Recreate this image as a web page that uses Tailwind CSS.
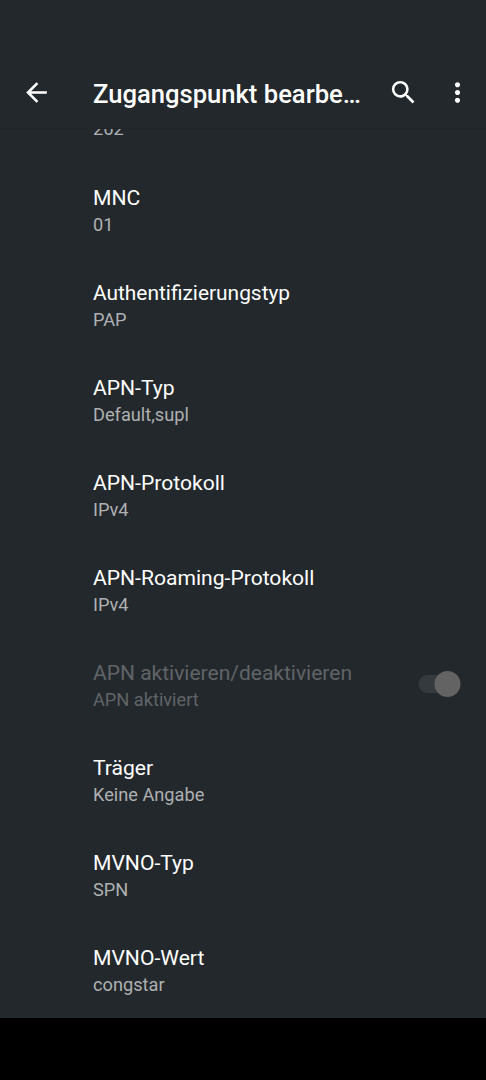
<!DOCTYPE html>
<html lang="de">
<head>
    <meta charset="UTF-8">
    <meta name="viewport" content="width=device-width, initial-scale=1.0">
    <title>Zugangspunkt bearbeiten</title>
    <script src="https://cdn.jsdelivr.net/npm/@tailwindcss/browser@4"></script>
</head>
<body class="bg-[#23282c] text-white font-[Roboto,sans-serif] h-[1080px] flex flex-col overflow-hidden">

  <!-- App bar -->
  <header class="h-[129px] shrink-0 pt-14 flex items-center border-b border-[#202529]">
    <button class="ml-[21px] w-[31px] h-[31px]">
      <svg viewBox="0 0 24 24" class="w-full h-full" fill="currentColor"><path d="M20 11H7.83l5.59-5.59L12 4l-8 8 8 8 1.41-1.41L7.83 13H20v-2z"/></svg>
    </button>
    <h1 class="ml-[41px] pt-1 w-[275px] text-[25.6px] font-medium whitespace-nowrap">Zugangspunkt bearbe…</h1>
    <button class="ml-[20px] w-[31px] h-[31px]">
      <svg viewBox="0 0 24 24" class="w-full h-full" fill="currentColor"><path d="M15.5 14h-.79l-.28-.27A6.471 6.471 0 0 0 16 9.5 6.5 6.5 0 1 0 9.5 16c1.61 0 3.09-.59 4.23-1.57l.27.28v.79l5 4.99L20.49 19l-4.99-5zm-6 0C7.01 14 5 11.99 5 9.5S7.01 5 9.5 5 14 7.01 14 9.5 11.99 14 9.5 14z"/></svg>
    </button>
    <button class="ml-[23px] w-[31px] h-[31px]">
      <svg viewBox="0 0 24 24" class="w-full h-full" fill="currentColor"><path d="M12 8c1.1 0 2-.9 2-2s-.9-2-2-2-2 .9-2 2 .9 2 2 2zm0 2c-1.1 0-2 .9-2 2s.9 2 2 2 2-.9 2-2-.9-2-2-2zm0 6c-1.1 0-2 .9-2 2s.9 2 2 2 2-.9 2-2-.9-2-2-2z"/></svg>
    </button>
  </header>

  <!-- Settings list, scrolled so the MCC value sits half under the bar -->
  <main class="h-[889px] shrink-0 overflow-hidden pl-[93px]">
    <p class="-mt-3 h-[50.6px] text-[18.2px] leading-6 text-[#aeb0b2]">262</p>
    <div class="h-[95.12px] pt-4">
      <h2 class="text-[21.1px] leading-7">MNC</h2>
      <p class="text-[18.2px] leading-[25.4px] text-[#aeb0b2]">01</p>
    </div>
    <div class="h-[95.12px] pt-4">
      <h2 class="text-[20.9px] leading-7">Authentifizierungstyp</h2>
      <p class="text-[18.2px] leading-[25.4px] text-[#aeb0b2]">PAP</p>
    </div>
    <div class="h-[95.12px] pt-4">
      <h2 class="text-[21.1px] leading-7">APN-Typ</h2>
      <p class="text-[18.2px] leading-[25.4px] text-[#aeb0b2]">Default,supl</p>
    </div>
    <div class="h-[95.12px] pt-4">
      <h2 class="text-[21.1px] leading-7">APN-Protokoll</h2>
      <p class="text-[18.2px] leading-[25.4px] text-[#aeb0b2]">IPv4</p>
    </div>
    <div class="h-[95.12px] pt-4">
      <h2 class="text-[21.1px] leading-7">APN-Roaming-Protokoll</h2>
      <p class="text-[18.2px] leading-[25.4px] text-[#aeb0b2]">IPv4</p>
    </div>
    <div class="h-[95.12px] pt-4 flex justify-between">
      <div>
        <h2 class="text-[21px] leading-7 text-[#606467]">APN aktivieren/deaktivieren</h2>
        <p class="text-[18.2px] leading-[25.4px] text-[#606467]">APN aktiviert</p>
      </div>
      <svg viewBox="0 0 44 28" class="w-11 h-7 mt-[11px] mr-6"><rect x="0.5" y="5" width="38" height="18" rx="9" fill="#343a3e"/><circle cx="29.5" cy="14" r="13" fill="#636363"/></svg>
    </div>
    <div class="h-[95.12px] pt-4">
      <h2 class="text-[21.1px] leading-7">Träger</h2>
      <p class="text-[18.2px] leading-[25.4px] text-[#aeb0b2]">Keine Angabe</p>
    </div>
    <div class="h-[95.12px] pt-4">
      <h2 class="text-[21.1px] leading-7">MVNO-Typ</h2>
      <p class="text-[18.2px] leading-[25.4px] text-[#aeb0b2]">SPN</p>
    </div>
    <div class="h-[95.12px] pt-4">
      <h2 class="text-[21.1px] leading-7">MVNO-Wert</h2>
      <p class="text-[18.2px] leading-[25.4px] text-[#aeb0b2]">congstar</p>
    </div>
  </main>

  <!-- Navigation bar -->
  <footer class="flex-1 bg-black"></footer>
</body>
</html>
